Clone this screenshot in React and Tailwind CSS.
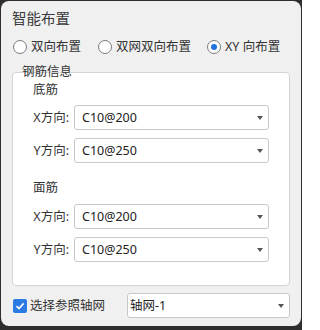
import React from 'react';

const Caret = () => (
  <svg width="6" height="4" viewBox="0 0 6 4" className="shrink-0">
    <path d="M0 0 L6 0 L3 4 Z" fill="#555" />
  </svg>
);

const Radio = ({ checked, label, className = '' }) => (
  <label className={`flex items-center gap-[4px] ${className}`}>
    <span className="flex h-[14px] w-[14px] items-center justify-center rounded-full border border-[#7b7b7b] bg-white">
      {checked && <span className="h-[6px] w-[6px] rounded-full bg-[#1f72de]" />}
    </span>
    <span>{label}</span>
  </label>
);

const Select = ({ value, className = '' }) => (
  <div className={`flex h-[25px] items-center justify-between rounded-[3px] border border-[#c8c8c8] bg-white pr-[5px] ${className}`}>
    <span className="text-[#222]">{value}</span>
    <Caret />
  </div>
);

const Row = ({ label, value, className = '' }) => (
  <div className={`flex items-center ${className}`}>
    <span className="w-[36px] text-right">{label}</span>
    <Select value={value} className="ml-[5px] flex-1 pl-[7px]" />
  </div>
);

export default function App() {
  return (
    <div className="h-[330px] w-[302px] bg-[#2e2e2e] px-px pb-[4px] pt-px font-['Noto_Sans','Noto_Sans_CJK_SC',sans-serif] text-[12.5px] leading-[18px] text-[#333]">
      <div className="flex h-full flex-col rounded-[8px] bg-[#f0f0f0] px-[11px] pt-[7px]">
        <div className="h-[20px] text-[14.5px] leading-[20px] text-[#3a3a3a]">智能布置</div>

        <div className="mt-[9px] flex h-[20px] items-center pl-px">
          <Radio label="双向布置" />
          <Radio label="双网双向布置" className="ml-[17px]" />
          <Radio label="XY 向布置" checked className="ml-[16px]" />
        </div>

        <div className="relative mt-[15px] rounded-[4px] border border-[#d4d4d4] bg-white px-[20px] pb-[23px] pt-[8px]">
          <span className="absolute left-[9px] top-[-10px]">钢筋信息</span>
          <div>底筋</div>
          <Row label="X方向:" value="C10@200" className="mt-[6px]" />
          <Row label="Y方向:" value="C10@250" className="mt-[8px]" />
          <div className="mt-[16px]">面筋</div>
          <Row label="X方向:" value="C10@200" className="mt-[7px]" />
          <Row label="Y方向:" value="C10@250" className="mt-[8px]" />
        </div>

        <div className="mt-[7px] flex h-[25px] items-center justify-between">
          <label className="flex items-center gap-[3px] pl-px">
            <span className="flex h-[14px] w-[14px] items-center justify-center rounded-[2px] bg-[#2b7be3]">
              <svg width="10" height="10" viewBox="0 0 10 10">
                <path d="M1.5 5.2 L4 7.6 L8.6 2.4" fill="none" stroke="#fff" strokeWidth="1.6" />
              </svg>
            </span>
            <span>选择参照轴网</span>
          </label>
          <Select value="轴网-1" className="w-[163px] pl-[2px]" />
        </div>
      </div>
    </div>
  );
}
